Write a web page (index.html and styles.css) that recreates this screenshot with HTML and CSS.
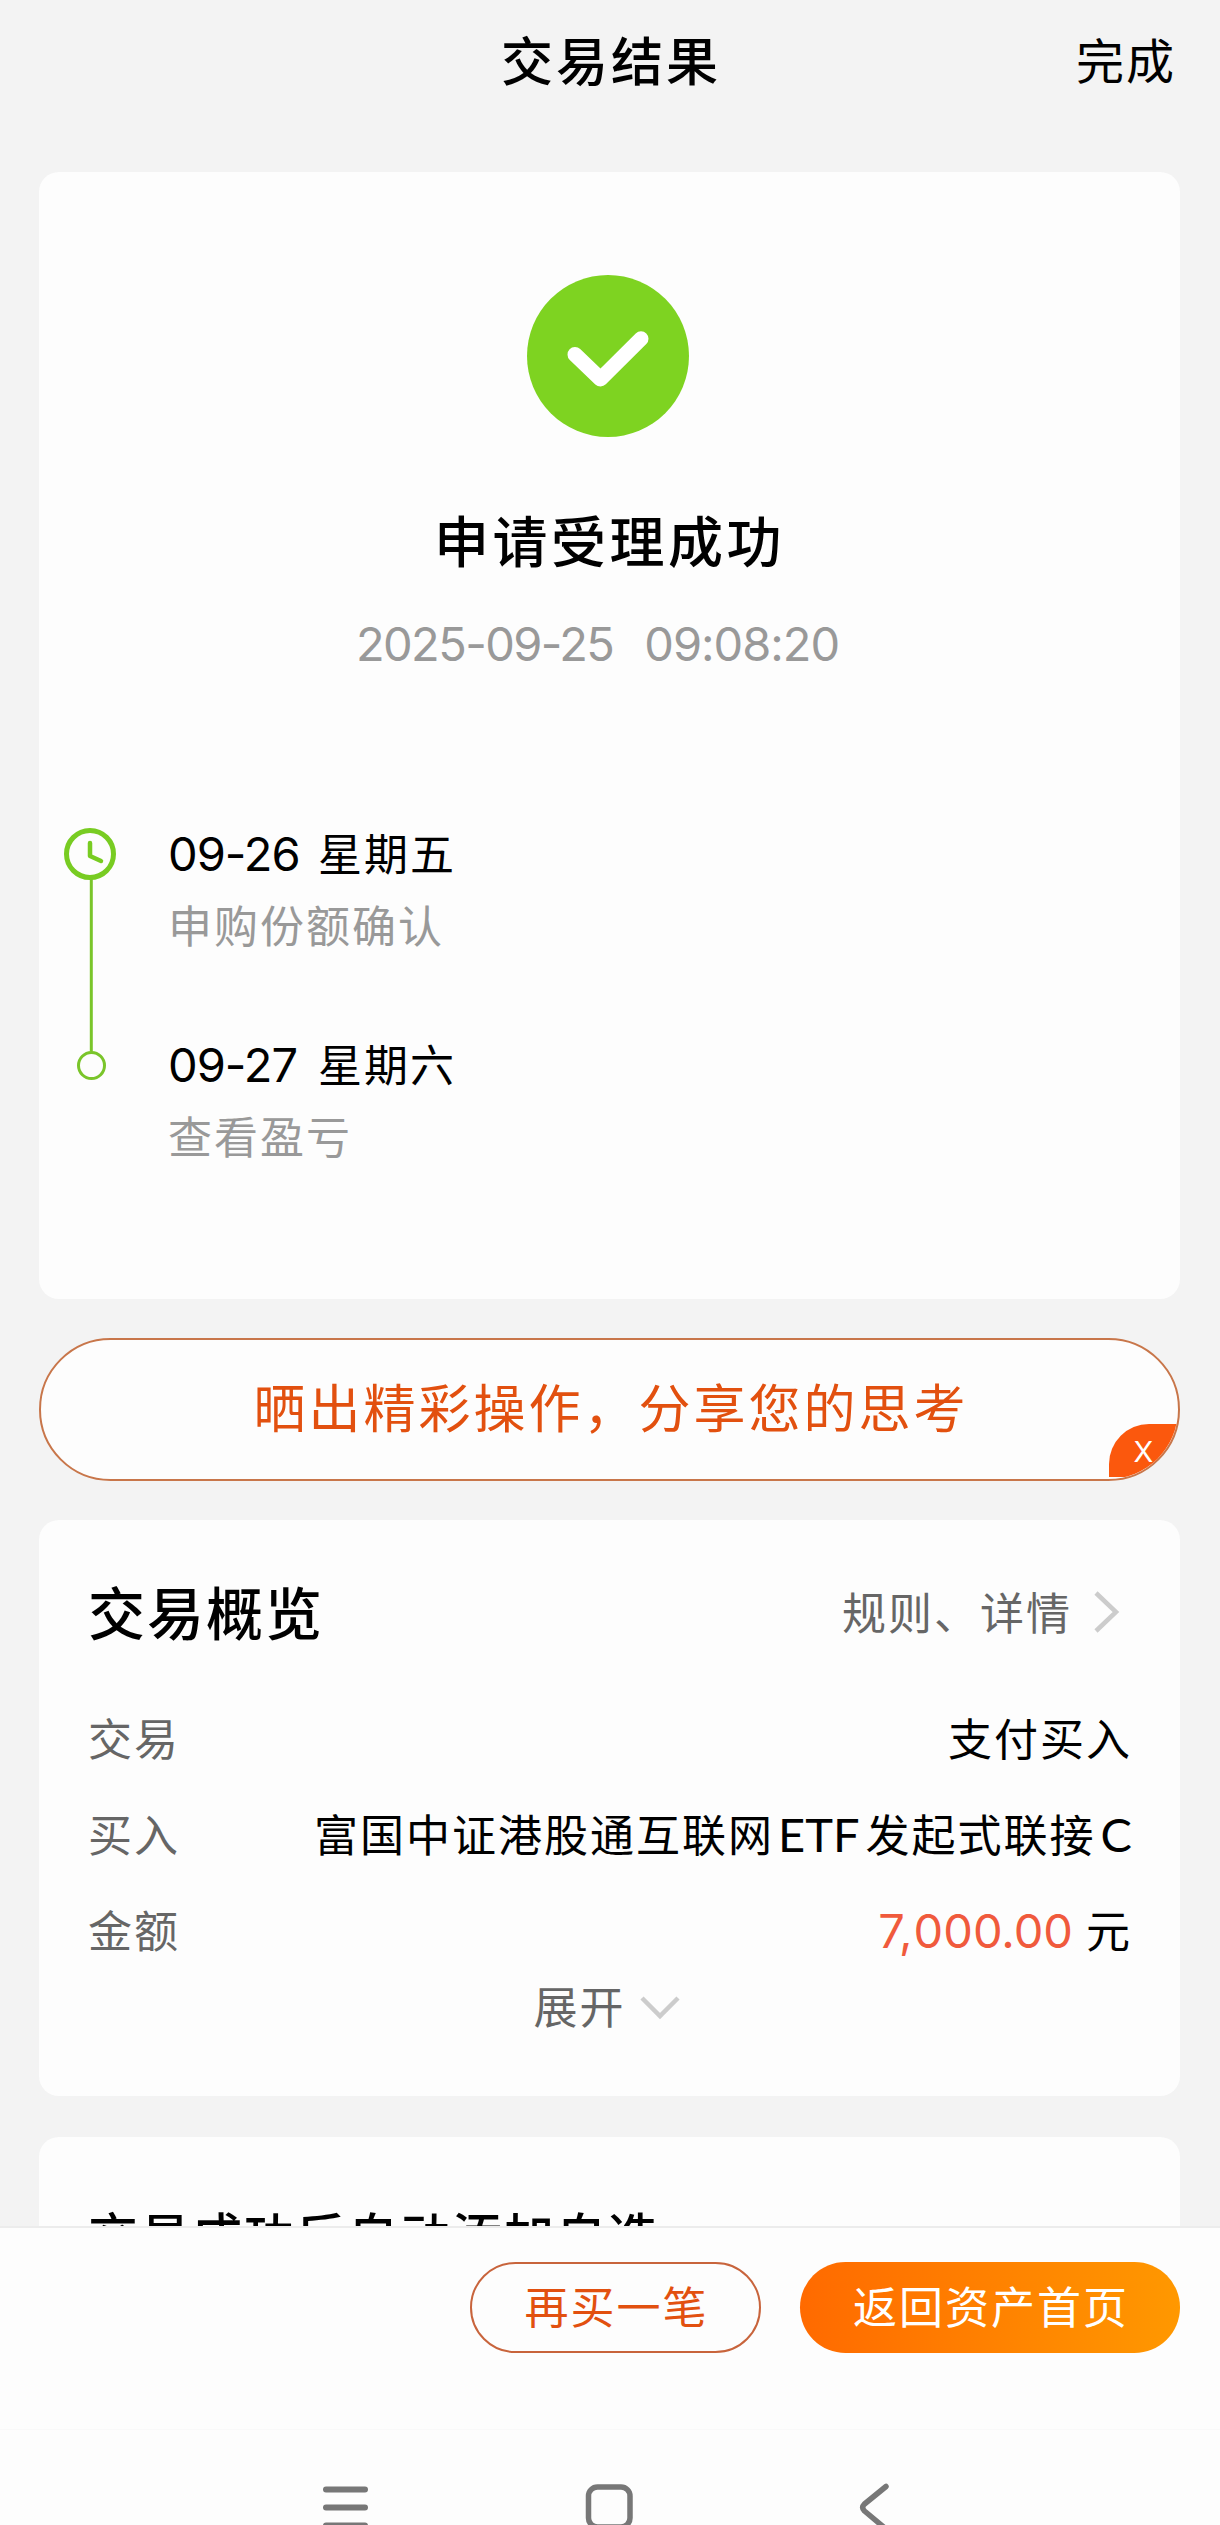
FILE: index.html
```html
<!DOCTYPE html>
<html lang="zh-CN">
<head>
<meta charset="utf-8">
<title>交易结果</title>
<link rel="stylesheet" href="styles.css">
</head>
<body>
<div class="screen">
  <header class="topbar">
    <h1 class="topbar-title">交易结果</h1>
    <a class="topbar-done">完成</a>
  </header>
  <main class="content">
    <section class="card result">
      <svg class="result-icon" viewBox="0 0 162 162"><circle cx="81" cy="81" r="81" fill="#7ed321"/><path d="M48 79.500L73.500 104L114 63.700" fill="none" stroke="#fff" stroke-width="15" stroke-linecap="round" stroke-linejoin="round"/></svg>
      <h2 class="result-title">申请受理成功</h2>
      <p class="result-time"><span class="date">2025-09-25</span><span class="clock">09:08:20</span></p>
      <div class="timeline">
        <svg class="rail" viewBox="0 0 54 260"><path d="M28.300 52V224.500" stroke="#7ac52a" stroke-width="3"/><circle cx="27" cy="27" r="23.500" fill="none" stroke="#78cc22" stroke-width="5"/><path d="M27 16V29L38 34" fill="none" stroke="#78cc22" stroke-width="4.500" stroke-linecap="round" stroke-linejoin="round"/><circle cx="28.500" cy="238.500" r="13" fill="none" stroke="#7ac52a" stroke-width="3"/></svg>
        <ol class="steps">
          <li class="step"><p class="step-date"><span class="num">09-26</span><span class="day">星期五</span></p><p class="step-note">申购份额确认</p></li>
          <li class="step"><p class="step-date"><span class="num">09-27</span><span class="day">星期六</span></p><p class="step-note">查看盈亏</p></li>
        </ol>
      </div>
    </section>
    <div class="share">
      <span class="share-text">晒出精彩操作，分享您的思考</span>
      <span class="share-close">X</span>
    </div>
    <section class="card overview">
      <div class="overview-head">
        <h2 class="overview-title">交易概览</h2>
        <a class="overview-link">规则、详情<svg class="chev-right" viewBox="0 0 26 42"><path d="M2 2L22 21L2 40" fill="none" stroke="#ccc" stroke-width="4.500"/></svg></a>
      </div>
      <dl class="rows">
        <div class="row"><dt>交易</dt><dd>支付买入</dd></div>
        <div class="row"><dt>买入</dt><dd class="fund">富国中证港股通互联网<span class="latin">ETF</span>发起式联接<span class="latin last">C</span></dd></div>
        <div class="row"><dt>金额</dt><dd><span class="amount">7<span class="comma">,</span>000.00</span><span class="unit">元</span></dd></div>
      </dl>
      <a class="expand">展开<svg class="chev-down" viewBox="0 0 40 24"><path d="M2 2L20 20L38 2" fill="none" stroke="#ccc" stroke-width="4.500"/></svg></a>
    </section>
    <section class="card watch"><h2 class="watch-title">交易成功后自动添加自选</h2></section>
  </main>
  <footer class="actions">
    <a class="btn btn-line">再买一笔</a>
    <a class="btn btn-fill">返回资产首页</a>
  </footer>
  <nav class="sysnav">
    <svg class="nav-icons" viewBox="0 0 1220 96"><g fill="none" stroke="#777" stroke-linecap="round" stroke-linejoin="round"><path stroke-width="6" d="M326 59.500H365M326 77.500H365M326 95.500H365"/><rect stroke-width="5.500" x="588.500" y="57" width="41.500" height="40" rx="9"/><path stroke-width="5.500" d="M886 56.500L864.500 74Q861 77.500 864.500 81L886 99"/></g></svg>
  </nav>
</div>
</body>
</html>
```
FILE: styles.css
```css
* { box-sizing: border-box; margin: 0; padding: 0; }
body { width: 1220px; height: 2525px; overflow: hidden; background: #f3f3f3; color: #000; font-family: "Noto Sans CJK SC", sans-serif; font-weight: 400; }
h1, h2 { font-weight: 500; }
ol { list-style: none; }
.screen { height: 2525px; display: flex; flex-direction: column; }
.topbar { height: 172px; flex: none; display: grid; grid-template-columns: 1fr auto 1fr; padding: 0 44px 0 46px; line-height: 117px; }
.topbar-title { grid-column: 2; font-size: 52px; letter-spacing: 3px; }
.topbar-done { justify-self: end; font-size: 48px; letter-spacing: 2px; }
.content { flex: 1; min-height: 0; overflow: hidden; padding: 0 40px 0 39px; display: flex; flex-direction: column; }
.card { flex: none; background: #fdfdfd; border-radius: 20px; }
.result { height: 1127px; padding: 103px 24px 0; display: flex; flex-direction: column; }
.result-icon { width: 162px; height: 162px; align-self: center; margin-right: 3px; }
.result-title { margin-top: 59px; line-height: 84px; font-size: 55px; letter-spacing: 3.500px; text-align: center; }
.result-time { margin: 31px 0 0 293px; display: flex; gap: 31px; font: 400 47px/66px Inter, sans-serif; color: #999; }
.date { letter-spacing: -1.600px; }
.clock { letter-spacing: -1px; }
.timeline { margin-top: 150px; display: flex; gap: 51px; }
.rail { width: 54px; height: 260px; }
.steps { margin-top: -10px; }
.step { height: 211px; }
.step-date { height: 70px; line-height: 70px; display: flex; align-items: baseline; gap: 20px; }
.num { font-family: Inter, sans-serif; font-size: 47px; letter-spacing: -1px; width: 130px; white-space: nowrap; }
.day { font-size: 44px; letter-spacing: 2px; }
.step-note { line-height: 74px; font-size: 44px; letter-spacing: 2px; color: #999; }
.share { position: relative; flex: none; height: 143px; margin: 39px 0; border: 2px solid #c8764a; border-radius: 72px; background: #fdfdfd; color: #e2500f; text-align: center; line-height: 131px; font-size: 52px; letter-spacing: 3px; padding-left: 3px; overflow: hidden; }
.share-close { position: absolute; right: 0; bottom: 2px; width: 69px; height: 53px; border-radius: 40px 0 0 0; background: #fb580d; color: #fff; font: 400 29px/56px Inter, sans-serif; letter-spacing: 0; }
.overview { height: 576px; padding: 47px 50px 0 49px; margin-bottom: 41px; }
.overview-head { height: 86px; display: flex; justify-content: space-between; align-items: center; }
.overview-title { font-size: 57px; letter-spacing: 2px; }
.overview-link { display: flex; align-items: center; gap: 22px; font-size: 44px; letter-spacing: 2px; color: #666; padding: 2px 10px 0 0; }
.chev-right { width: 26px; height: 42px; margin-top: 2px; }
.rows { margin-top: 36px; }
.row { height: 96px; line-height: 96px; display: flex; justify-content: space-between; font-size: 44px; letter-spacing: 2px; }
.row dt { color: #666; }
.row dd { margin-right: -2px; }
.latin { font-family: Lato, sans-serif; font-size: 47px; letter-spacing: 0; line-height: 1; margin: 0 6px 0 4px; }
.latin.last { margin: 0 0 0 5px; }
.amount { color: #f05a3c; font-family: Inter, sans-serif; font-size: 47px; letter-spacing: 0; line-height: 1; }
.comma { margin: 0 1px 0 0; }
.unit { margin-left: 13px; }
.expand { display: flex; justify-content: center; align-items: center; gap: 14px; height: 56px; margin-right: 5px; line-height: 56px; font-size: 44px; letter-spacing: 2px; color: #666; }
.chev-down { width: 40px; height: 24px; margin-top: 5px; }
.watch { height: 300px; padding: 59px 49px 0; }
.watch-title { font-size: 50px; line-height: 74px; letter-spacing: 2px; white-space: nowrap; }
.actions { flex: none; height: 203px; background: #fdfdfd; border-top: 2px solid #ececec; padding: 34px 40px 0; display: flex; justify-content: flex-end; gap: 39px; }
.btn { height: 91px; border-radius: 46px; font-size: 44px; letter-spacing: 2px; text-align: center; }
.btn-line { width: 291px; border: 2px solid #c8643c; color: #e2500f; line-height: 83px; padding-left: 2px; }
.btn-fill { width: 380px; color: #fff; background: linear-gradient(90deg, #ff6a00, #ff9800); line-height: 87px; padding-left: 2px; }
.sysnav { flex: none; height: 96px; background: #fdfdfd; border-top: 1px solid #f9f9f9; }
.nav-icons { display: block; width: 1220px; height: 96px; }
```
